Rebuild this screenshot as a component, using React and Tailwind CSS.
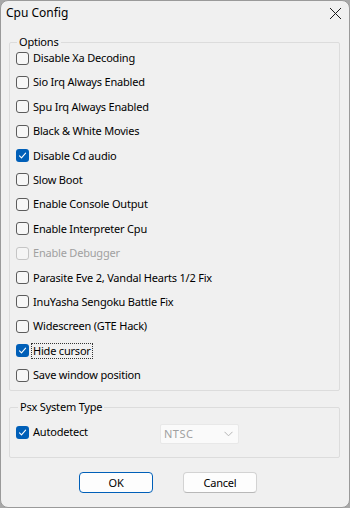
import React, { useState } from 'react';

const options = [
  { label: 'Disable Xa Decoding', checked: false },
  { label: 'Sio Irq Always Enabled', checked: false },
  { label: 'Spu Irq Always Enabled', checked: false },
  { label: 'Black & White Movies', checked: false },
  { label: 'Disable Cd audio', checked: true },
  { label: 'Slow Boot', checked: false },
  { label: 'Enable Console Output', checked: false },
  { label: 'Enable Interpreter Cpu', checked: false },
  { label: 'Enable Debugger', checked: false, disabled: true },
  { label: 'Parasite Eve 2, Vandal Hearts 1/2 Fix', checked: false },
  { label: 'InuYasha Sengoku Battle Fix', checked: false },
  { label: 'Widescreen (GTE Hack)', checked: false },
  { label: 'Hide cursor', checked: true, focused: true },
  { label: 'Save window position', checked: false },
];

const Box = ({ checked, disabled }) => {
  if (checked) {
    return (
      <span className="w-[13px] h-[13px] rounded-[3px] bg-[#005fb8] flex items-center justify-center shrink-0">
        <svg width="9" height="9" viewBox="0 0 9 9" fill="none">
          <path d="M1.5 4.8 L3.5 6.8 L7.6 2.2" stroke="#ffffff" strokeWidth="1.1" strokeLinecap="round" strokeLinejoin="round" />
        </svg>
      </span>
    );
  }
  return (
    <span
      className={`w-[13px] h-[13px] rounded-[3px] border shrink-0 ${
        disabled ? 'border-[#c5c5c5] bg-[#f5f5f5]' : 'border-[#5c5c5c] bg-[#f7f7f7]'
      }`}
    />
  );
};

const Check = ({ label, checked, disabled, focused, onToggle }) => (
  <div className="h-[20px] flex items-center pl-[6px] cursor-default" onClick={disabled ? undefined : onToggle}>
    <Box checked={checked} disabled={disabled} />
    <span
      className={`ml-[2px] px-[1px] leading-[14px] border border-dotted ${
        focused ? 'border-[#333]' : 'border-transparent'
      } ${disabled ? 'text-[#a0a0a0]' : 'text-black'}`}
    >
      {label}
    </span>
  </div>
);

export default function App() {
  const [state, setState] = useState(options.map(o => o.checked));
  const [auto, setAuto] = useState(true);

  const toggle = i => setState(s => s.map((v, j) => (j === i ? !v : v)));

  return (
    <div className="w-[350px] h-[508px] bg-[#a8a8a8]">
      <div
        className="w-[350px] h-[508px] bg-[#f0f0f0] border border-[#9a9a9a] rounded-[8px] flex flex-col text-[11px] tracking-[-0.2px] text-black"
        style={{ fontFamily: '"Noto Sans", "Open Sans", sans-serif' }}
      >
        {/* Title bar */}
        <div className="h-[29px] flex items-center justify-between pl-[5px] pr-[7px]">
          <span className="text-[12px] tracking-normal leading-[14px] -mt-[5px]">Cpu Config</span>
          <svg width="13" height="13" viewBox="0 0 13 13" className="-mt-[4px]">
            <path d="M1 1 L12 12 M12 1 L1 12" stroke="#1a1a1a" strokeWidth="1" />
          </svg>
        </div>

        {/* Options */}
        <fieldset className="mt-[6px] ml-[8px] mr-[9px] border border-[#dcdcdc] rounded-[2px] pb-[5px]">
          <legend className="ml-[7px] px-[2px] leading-[12px]">Options</legend>
          <div className="flex flex-col gap-[4.4px]">
            {options.map((o, i) => (
              <Check
                key={o.label}
                label={o.label}
                checked={state[i]}
                disabled={o.disabled}
                focused={o.focused}
                onToggle={() => toggle(i)}
              />
            ))}
          </div>
        </fieldset>

        {/* Psx System Type */}
        <fieldset className="mt-[10px] ml-[8px] mr-[9px] border border-[#dcdcdc] rounded-[2px] pt-[7px] pb-[13px]">
          <legend className="ml-[8px] px-[2px] leading-[12px]">Psx System Type</legend>
          <div className="flex items-center">
            <div className="w-[150px]">
              <Check label="Autodetect" checked={auto} onToggle={() => setAuto(a => !a)} />
            </div>
            <div className="w-[79px] h-[20px] mt-[4px] bg-[#fafafa] border border-[#e8e8e8] rounded-[2px] flex items-center justify-between pl-[3px] pr-[5px]">
              <span className="text-[#a0a0a0] tracking-[0.5px]">NTSC</span>
              <svg width="9" height="6" viewBox="0 0 9 6">
                <path d="M0.5 0.8 L4.5 4.8 L8.5 0.8" stroke="#b5b5b5" strokeWidth="1" fill="none" />
              </svg>
            </div>
          </div>
        </fieldset>

        {/* Buttons */}
        <div className="flex gap-[30px] pl-[78px] mt-[14px]">
          <button className="w-[74px] h-[21px] rounded-[4px] border border-[#005fb8] bg-[#fdfdfd] leading-[14px]">
            OK
          </button>
          <button className="w-[74px] h-[21px] rounded-[4px] border border-[#d3d3d3] border-b-[#b8b8b8] bg-[#fdfdfd] leading-[14px]">
            Cancel
          </button>
        </div>
      </div>
    </div>
  );
}
